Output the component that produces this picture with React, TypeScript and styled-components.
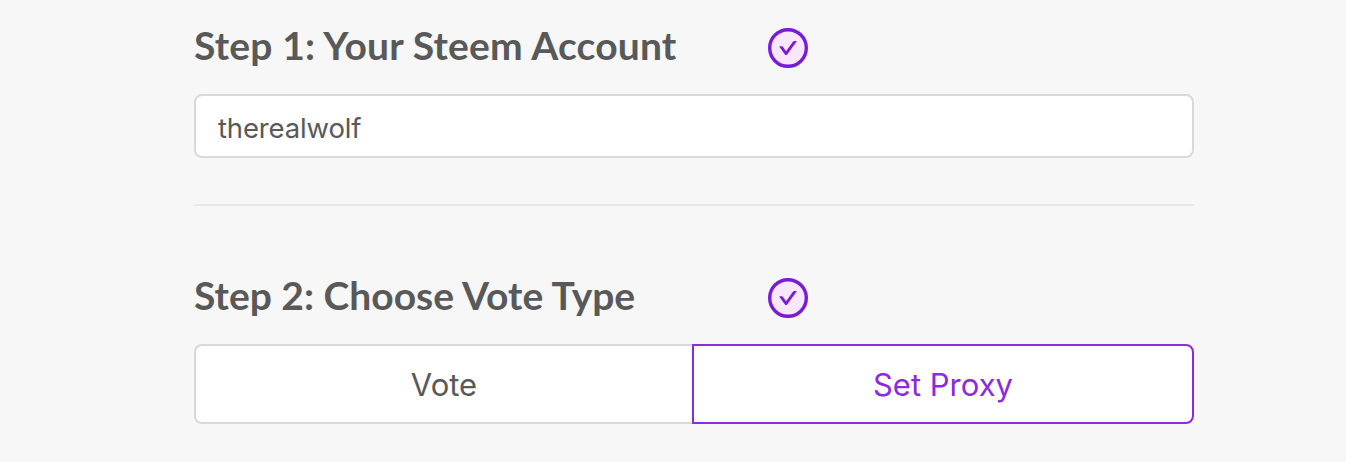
import React from "react";
import styled, { createGlobalStyle } from "styled-components";

const GlobalStyle = createGlobalStyle`
  * { box-sizing: border-box; }
  body { margin: 0; background: #f7f7f7; }
`;

const Page = styled.main`
  width: 1000px;
  height: 462px;
  margin-left: 194px;
  padding-top: 22px;
  font-family: Inter, "Liberation Sans", sans-serif;
  color: #595959;
`;

const StepHeader = styled.header`
  display: grid;
  grid-template-columns: 574px 40px;
  align-items: center;
  height: 52px;
  margin-bottom: 20px;
`;

const Title = styled.h2<{ $tracking?: number }>`
  margin: 0;
  padding-bottom: 6px;
  font: 700 39px/46px Lato, sans-serif;
  letter-spacing: ${(p) => p.$tracking ?? 0}px;
  color: #595959;
  white-space: nowrap;
`;

const AccountInput = styled.input`
  display: block;
  width: 100%;
  height: 64px;
  padding: 3px 22px 0;
  border: 2px solid #d9d9d9;
  border-radius: 8px;
  background: #fff;
  font: 400 27.5px/42px Inter, sans-serif;
  letter-spacing: -0.15px;
  color: #595959;
  outline: none;
`;

const Divider = styled.hr`
  height: 2px;
  margin: 46px 0 66px;
  border: 0;
  background: #e8e8e8;
`;

const VoteTypes = styled.div`
  display: flex;
`;

const VoteButton = styled.button<{ $selected?: boolean }>`
  flex: 0 0 ${(p) => (p.$selected ? 502 : 498)}px;
  height: 80px;
  padding: 1px 0 0;
  border: 2px solid ${(p) => (p.$selected ? "#8a2bde" : "#d9d9d9")};
  border-right-width: ${(p) => (p.$selected ? 2 : 0)}px;
  border-radius: ${(p) => (p.$selected ? "0 8px 8px 0" : "8px 0 0 8px")};
  background: #fff;
  color: ${(p) => (p.$selected ? "#8a2bde" : "#595959")};
  font: 400 31px/40px Inter, sans-serif;
`;

const CheckIcon = () => (
  <svg width="40" height="40" viewBox="64 64 896 896" aria-label="Complete">
    <circle cx="512" cy="512" r="410" fill="#f8e7fe" stroke="#7a1bd9" strokeWidth="76" />
    <path
      fill="#7a1bd9"
      d="M699 353h-46.9c-10.2 0-19.9 4.9-25.9 13.3L469 584.3l-71.2-98.8c-6-8.3-15.6-13.3-25.9-13.3H325c-6.5 0-10.3 7.4-6.5 12.7l124.6 172.8a31.8 31.8 0 0 0 51.7 0l210.6-292c3.9-5.3.1-12.7-6.4-12.7z"
    />
  </svg>
);

export default function App() {
  return (
    <>
      <GlobalStyle />
      <Page>
        <StepHeader>
          <Title $tracking={0.18}>Step 1: Your Steem Account</Title>
          <CheckIcon />
        </StepHeader>
        <AccountInput defaultValue="therealwolf" aria-label="Steem account" />
        <Divider />
        <StepHeader>
          <Title>Step 2: Choose Vote Type</Title>
          <CheckIcon />
        </StepHeader>
        <VoteTypes>
          <VoteButton>Vote</VoteButton>
          <VoteButton $selected>Set Proxy</VoteButton>
        </VoteTypes>
      </Page>
    </>
  );
}
